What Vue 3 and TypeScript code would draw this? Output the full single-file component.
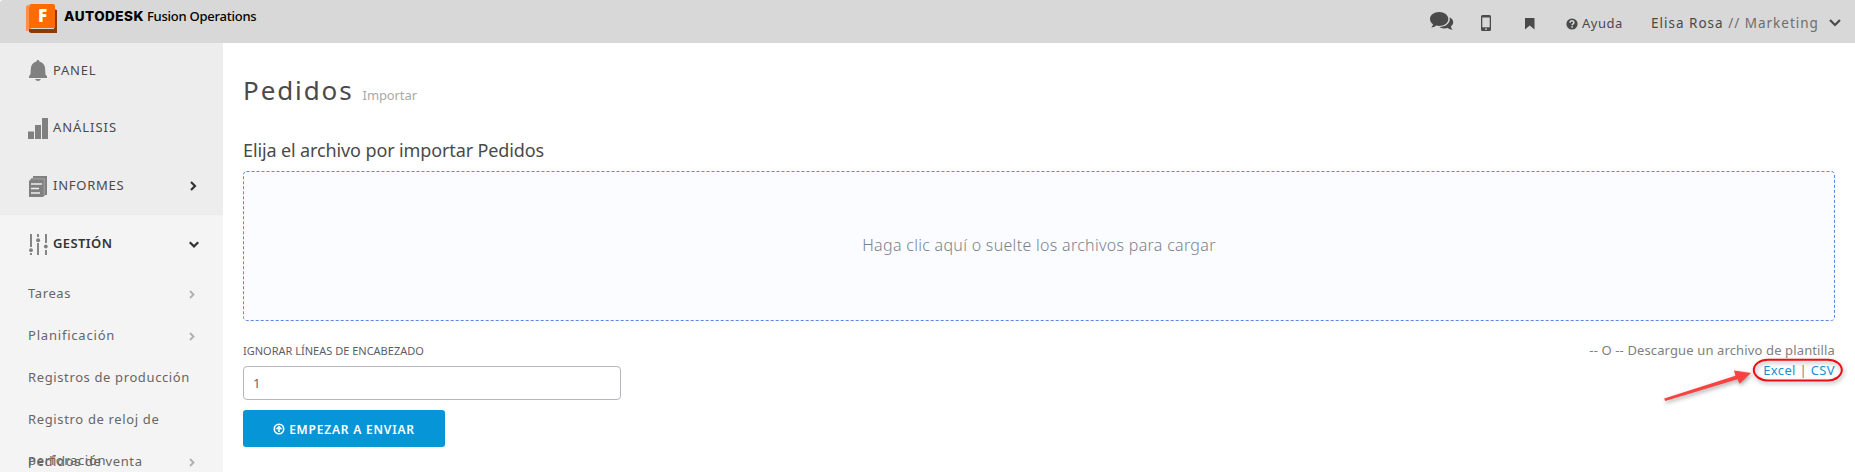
<script setup lang="ts">
interface Section { label: string; icon: string; tracking: number; arrow?: 'right' | 'down'; active?: boolean }
interface SubItem { label: string; tracking: number; arrow?: boolean }

const sections: Section[] = [
  { label: 'PANEL', icon: 'bell', tracking: 0.75 },
  { label: 'ANÁLISIS', icon: 'bars', tracking: 0.95 },
  { label: 'INFORMES', icon: 'docs', tracking: 0.75, arrow: 'right' },
  { label: 'GESTIÓN', icon: 'sliders', tracking: 0.4, arrow: 'down', active: true },
]

const subItems: SubItem[] = [
  { label: 'Tareas', tracking: 0.6, arrow: true },
  { label: 'Planificación', tracking: 0.8, arrow: true },
  { label: 'Registros de producción', tracking: 0.62 },
  { label: 'Registro de reloj de perforación', tracking: 0.65 },
  { label: 'Pedidos de venta', tracking: 0.62, arrow: true },
]
</script>

<template>
  <div class="app">
    <header class="topbar">
      <div class="brand">
        <svg class="logo" width="32" height="30" viewBox="0 0 32 30">
          <path d="M0 2 5 0V26L0 27Z" fill="#ff9046" />
          <path d="M3 25H28V5L31 6V29H5L3 28Z" fill="#8f3a04" />
          <path d="M5 0H27Q29 0 29 2V24H3V4Z" fill="#ff6b00" />
          <text class="logo-letter" x="12" y="18">F</text>
        </svg>
        <span class="brand-company">AUTODESK</span>
        <span class="brand-product">Fusion Operations</span>
      </div>
      <nav class="tools">
        <svg class="chat" width="24" height="19" viewBox="0 0 24 19" fill="#4a4a4a">
          <path d="M9.200 0C14.300 0 18.300 3.100 18.300 7s-4 7-9.100 7c-1 0-2-.1-2.900-.4C4.800 14.800 3.200 15.500 1.200 15.600c1.100-1.100 1.700-2.200 1.800-3.400C1.200 10.900 0 9.100 0 7 0 3.100 4.100 0 9.200 0Z" />
          <path d="M19.500 5.300c2.200 1 3.700 2.700 3.700 4.900 0 1.700-.9 3.100-2.300 4.200.2 1.200.8 2.200 1.900 3.300-2-.1-3.700-.7-5.100-1.700-3 .8-6.300.3-8.200-1.100 5.700 0 10.300-3.400 10.300-7.700 0-.7-.1-1.300-.3-1.900Z" />
        </svg>
        <svg class="phone" width="10" height="16" viewBox="0 0 10 16">
          <rect width="10" height="16" rx="1.600" fill="#4a4a4a" />
          <rect x="1.300" y="2.500" width="7.400" height="9.800" fill="#d8d8d8" />
          <circle cx="5" cy="14.100" r=".9" fill="#d8d8d8" />
        </svg>
        <svg class="bookmark" width="10" height="12" viewBox="0 0 10 12"><path d="M0 0H9.500V11.500L4.750 7.500 0 11.500Z" fill="#4a4a4a" /></svg>
        <svg class="help-icon" width="12" height="12" viewBox="0 0 12 12">
          <circle cx="6" cy="6" r="5.600" fill="#4a4a4a" />
          <path d="M4.100 4.700C4.200 2.200 7.900 2.300 7.900 4.500 7.900 5.900 6.100 5.700 6.100 7.300" fill="none" stroke="#dedede" stroke-width="1.500" />
          <rect x="5.300" y="8.200" width="1.600" height="1.500" fill="#dedede" />
        </svg>
        <span class="help-label">Ayuda</span>
        <span class="user">Elisa Rosa <span class="dept">// Marketing</span></span>
        <svg class="user-arrow" width="12" height="8" viewBox="0 0 12 8"><path d="M1 1 6 6 11 1" fill="none" stroke="#4a4a4a" stroke-width="2.200" /></svg>
      </nav>
    </header>

    <div class="body">
      <aside class="sidebar">
        <div v-for="s in sections" :key="s.label" class="section" :class="{ active: s.active }">
          <svg class="section-icon" width="20" height="22" viewBox="0 0 20 22" fill="#808080">
            <template v-if="s.icon === 'bell'">
              <path d="M9.900 0C10.800 0 11.300.6 11.400 1.500 15 2.300 16.800 5 17.100 8.500L17.400 14.300 19 16.300V18H1V16.300L2.500 14.300 2.800 8.500C3.100 5 5 2.300 8.400 1.500 8.500.6 9 0 9.900 0ZM7.200 19H12.800C12.300 21.600 7.700 21.600 7.200 19Z" />
            </template>
            <template v-else-if="s.icon === 'bars'">
              <rect y="14.500" width="6" height="7.500" /><rect x="7" y="8" width="6" height="14" /><rect x="14" y="1" width="6" height="21" />
            </template>
            <template v-else-if="s.icon === 'docs'">
              <path d="M5 1H19V20H17V3H5Z" /><path d="M3 3H17V21H15V5H3Z" fill="#999" />
              <path d="M2.500 4.500H15.500V22H1V6Z" />
              <path d="M3 9H14M3 13.500H11M3 18H12" stroke="#eee" stroke-width="1.700" />
            </template>
            <template v-else>
              <path d="M3 1V14M3 20V22M10 1V4M10 10V22M18 1V10M18 17V22" fill="none" stroke="#808080" stroke-width="1.900" />
              <circle cx="3" cy="17.200" r="1.900" /><circle cx="10.100" cy="7.200" r="2" /><circle cx="17.800" cy="13.500" r="1.900" />
            </template>
          </svg>
          <span class="section-label" :style="{ letterSpacing: s.tracking + 'px' }">{{ s.label }}</span>
          <svg v-if="s.arrow" class="section-arrow" width="10" height="10" viewBox="0 0 10 10">
            <path :d="s.arrow === 'right' ? 'M2 1 6 5 2 9' : 'M.700 3.200 5 7.400 9.300 3.200'" fill="none" stroke="#333" stroke-width="2.200" />
          </svg>
        </div>
        <div v-for="i in subItems" :key="i.label" class="sub">
          <span class="sub-label" :style="{ letterSpacing: i.tracking + 'px' }">{{ i.label }}</span>
          <svg v-if="i.arrow" class="sub-arrow" width="6" height="9" viewBox="0 0 6 9"><path d="M1 1 4.500 4.500 1 8" fill="none" stroke="#b0b0b0" stroke-width="1.900" /></svg>
        </div>
      </aside>

      <main class="content">
        <h1 class="title">Pedidos<small>Importar</small></h1>
        <h2 class="subtitle">Elija el archivo por importar Pedidos</h2>
        <div class="dropzone">
          <svg class="dropzone-frame" width="100%" height="100%"><rect x=".5" y=".5" width="1591" height="149" rx="3" fill="#fafcff" stroke="#5b88e8" stroke-dasharray="3 2" /></svg>
          <span class="dropzone-text">Haga clic aquí o suelte los archivos para cargar</span>
        </div>
        <div class="options">
          <form class="form" @submit.prevent>
            <label class="label" for="header-lines">IGNORAR LÍNEAS DE ENCABEZADO</label>
            <input id="header-lines" class="input" type="text" value="1" />
            <button class="submit" type="submit">
              <svg class="submit-icon" width="12" height="12" viewBox="0 0 12 12" fill="none" stroke="#fff">
                <circle cx="6" cy="6" r="4.700" stroke-width="1.600" />
                <path d="M6 9V4.200M3.500 6.200 6 3.700 8.500 6.200" stroke-width="1.600" />
              </svg>
              <span>EMPEZAR A ENVIAR</span>
            </button>
          </form>
          <div class="template">
            <div class="template-text">-- O -- Descargue un archivo de plantilla</div>
            <div class="template-links"><a>Excel</a> | <a>CSV</a>
              <svg class="marker" width="200" height="60" viewBox="0 0 200 60">
                <rect x="104.800" y="10.800" width="88" height="20.600" rx="14" ry="10.300" fill="none" stroke="#f00c14" stroke-width="2" />
                <path d="M15.200 49.500 16.200 52 88.500 30.200 90.700 34.800 102 24 85 21.500 86.500 26.800Z" fill="#f94242" />
              </svg>
            </div>
          </div>
        </div>
      </main>
    </div>
  </div>
</template>

<style>
html, body { margin: 0; overflow: hidden; background: #fff; }
</style>

<style scoped>
.app { width: 1855px; height: 472px; overflow: hidden; font-family: "Noto Sans", "Open Sans", sans-serif; color: #4a4a4a; background: #fff; }
.topbar { display: flex; justify-content: space-between; height: 43px; background: #d8d8d8; border-top-left-radius: 3px; }
.brand { display: flex; align-items: flex-start; padding: 4px 0 0 26px; color: #000; line-height: 24px; }
.logo { display: block; margin-right: 6px; }
.logo-letter { font: 800 17px "Open Sans", "Noto Sans", sans-serif; fill: #fff; }
.brand-company { font-family: Inter, sans-serif; font-weight: 800; font-size: 13.500px; letter-spacing: .5px; width: 83px; }
.brand-product { font-size: 13px; font-weight: 500; letter-spacing: -.25px; }
.tools { display: flex; align-items: flex-start; white-space: nowrap; }
.chat { margin: 12px 27px 0 0; }
.phone { margin: 15px 34px 0 0; }
.bookmark { margin: 18px 31px 0 0; }
.help-icon { margin: 18px 4px 0 0; }
.help-label { width: 69px; margin-top: 13px; font-size: 13px; line-height: 20px; letter-spacing: .5px; }
.user { width: 178px; margin-top: 13px; font-size: 13.500px; line-height: 20px; letter-spacing: 1px; }
.dept { color: #6d6d6d; }
.user-arrow { margin: 19px 14px 0 0; }
.body { display: flex; height: 429px; }
.sidebar { width: 223px; flex: none; background: #f4f4f4; overflow: hidden; }
.section { display: flex; align-items: center; height: 58px; padding-left: 28px; background: #ededed; }
.section:first-child { box-sizing: border-box; height: 56px; padding-bottom: 1px; }
.section.active { background: #f4f4f4; color: #333; font-weight: 600; }
.section-icon { flex: none; margin-right: 5px; }
.section-label { flex: 1; padding-bottom: 2px; font-size: 13px; line-height: 18px; }
.section-arrow { margin-right: 24px; }
.sub { display: flex; align-items: flex-start; height: 42px; padding: 0 28px; color: #666; }
.sub-label { flex: 1; font-size: 13px; line-height: 41px; }
.sub-arrow { flex: none; margin-top: 17px; }
.content { flex: none; width: 1592px; padding: 28px 0 0 20px; }
.title { height: 63px; margin: 0; font-size: 26px; font-weight: 400; line-height: 39px; letter-spacing: 1.900px; }
.title small { margin-left: 9px; font-size: 13px; letter-spacing: -.1px; color: #aaa; }
.subtitle { height: 37px; margin: 0; font-size: 18px; font-weight: 400; line-height: 32px; letter-spacing: -.12px; }
.dropzone { position: relative; display: flex; align-items: center; justify-content: center; height: 150px; }
.dropzone-frame { position: absolute; inset: 0; }
.dropzone-text { position: relative; padding-bottom: 2px; font-size: 16px; font-weight: 300; line-height: 22px; letter-spacing: .3px; color: #7c828a; }
.options { display: flex; justify-content: space-between; padding-top: 21px; }
.form { display: flex; flex-direction: column; align-items: flex-start; }
.label { height: 24px; font-size: 11px; line-height: 18px; color: #5d5d66; }
.input { box-sizing: border-box; width: 378px; height: 34px; padding: 0 9px; border: 1px solid #b5b5bb; border-radius: 4px; font: 13px "Noto Sans", sans-serif; color: #666; outline: none; }
.submit { display: flex; align-items: center; justify-content: center; gap: 4px; width: 202px; height: 37px; margin-top: 10px; padding: 1px 0 0; border: 0; border-radius: 3px; background: #0696d7; color: #fff; font: 600 12px "Noto Sans", sans-serif; letter-spacing: .8px; }
.template { font-size: 13px; text-align: right; color: #808080; }
.template-text { height: 18px; letter-spacing: .13px; line-height: 16px; }
.template-links { position: relative; letter-spacing: .35px; line-height: 21px; }
.template-links a { color: #1a91d0; }
.marker { position: absolute; right: -14px; top: -11px; overflow: visible; filter: drop-shadow(1px 2px 2px rgba(0, 0, 0, .35)); }
</style>
